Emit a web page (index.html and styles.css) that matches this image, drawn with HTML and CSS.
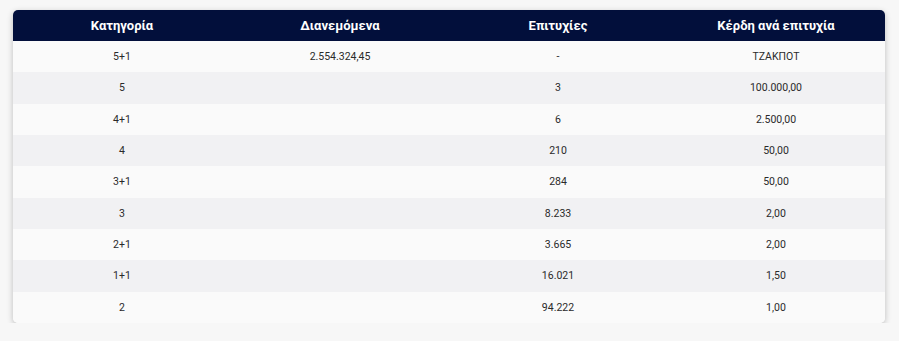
FILE: index.html
```html
<!DOCTYPE html>
<html lang="el">
<head>
<meta charset="utf-8">
<link rel="stylesheet" href="styles.css">
</head>
<body>
<div class="card">
<table class="prizes">
<thead>
<tr><th>Κατηγορία</th><th>Διανεμόμενα</th><th>Επιτυχίες</th><th>Κέρδη ανά επιτυχία</th></tr>
</thead>
<tbody>
<tr><td>5+1</td><td>2.554.324,45</td><td>-</td><td>ΤΖΑΚΠΟΤ</td></tr>
<tr><td>5</td><td></td><td>3</td><td>100.000,00</td></tr>
<tr><td>4+1</td><td></td><td>6</td><td>2.500,00</td></tr>
<tr><td>4</td><td></td><td>210</td><td>50,00</td></tr>
<tr><td>3+1</td><td></td><td>284</td><td>50,00</td></tr>
<tr><td>3</td><td></td><td>8.233</td><td>2,00</td></tr>
<tr><td>2+1</td><td></td><td>3.665</td><td>2,00</td></tr>
<tr><td>1+1</td><td></td><td>16.021</td><td>1,50</td></tr>
<tr><td>2</td><td></td><td>94.222</td><td>1,00</td></tr>
</tbody>
</table>
</div>
</body>
</html>
```
FILE: styles.css
```css
html, body {
  margin: 0;
  background: #f7f7f7;
}
body {
  padding: 10px 14px 0 13px;
}
.card {
  width: 872px;
  border-radius: 5px;
  overflow: hidden;
  box-shadow: 0 2px 6px rgba(0,0,0,0.24);
  background: #fafafa;
}
.prizes {
  width: 100%;
  border-collapse: collapse;
  table-layout: fixed;
  font-family: Roboto, "Liberation Sans", sans-serif;
}
.prizes th {
  background: #020f3b;
  color: #ffffff;
  font-family: Roboto, "Noto Sans", sans-serif;
  font-weight: 700;
  font-size: 13px;
  height: 31px;
  padding: 0;
  text-align: center;
}
.prizes td {
  height: 31.33px;
  padding: 0;
  text-align: center;
  font-size: 10.5px;
  color: #2a2a2a;
}
.prizes tbody tr:nth-child(odd) td {
  background: #fafafa;
}
.prizes tbody tr:nth-child(even) td {
  background: #f1f1f3;
}
```
